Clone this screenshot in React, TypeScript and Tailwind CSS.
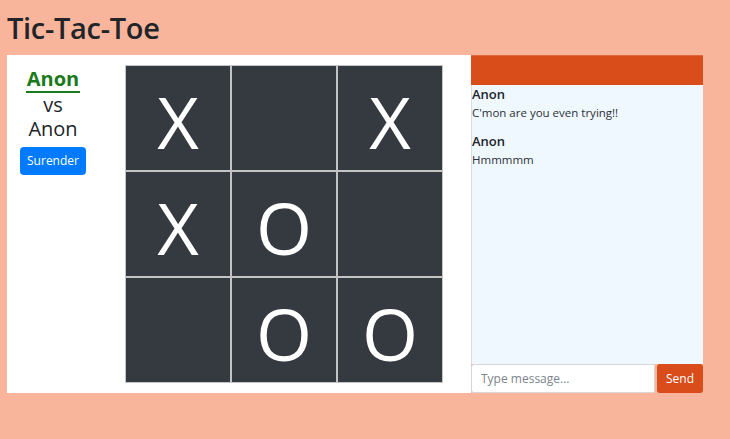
import React from "react";

const board = ["X", "", "X", "X", "O", "", "", "O", "O"];

const messages = [
  { user: "Anon", text: "C'mon are you even trying!!" },
  { user: "Anon", text: "Hmmmmm" },
];

export default function App() {
  return (
    <div
      className="h-[439px] w-full bg-[#f9b59b] text-[#212529]"
      style={{ fontFamily: '"Open Sans", "Noto Sans", sans-serif' }}
    >
      <h1 className="px-[7px] pt-[5px] text-[29px] font-semibold leading-[46px] tracking-[-0.3px]">
        Tic-Tac-Toe
      </h1>
      <div className="ml-[7px] mt-[4px] flex h-[338px] w-[696px]">
        {/* game panel */}
        <div className="flex w-[464px] bg-white">
          <div className="flex w-[92px] flex-col items-center pt-[13px] text-[20px] leading-[24px]">
            <span className="border-b-2 border-[#1b7a1b] px-[1px] pb-[1px] font-bold leading-[22px] text-[#1b7a1b]">
              Anon
            </span>
            <span className="leading-[23px]">vs</span>
            <span className="leading-[25px]">Anon</span>
            <button className="mt-[6px] h-[28px] rounded-[4px] bg-[#007bff] px-[7px] text-[12px] leading-[28px] text-white">
              Surender
            </button>
          </div>
          <div className="ml-[26px] mt-[10px] grid h-[318px] w-[318px] grid-cols-3 self-start">
            {board.map((v, i) => (
              <div
                key={i}
                className="flex h-[106px] w-[106px] items-center justify-center border border-[#c4c4c4] bg-[#343a40] pt-[5px] text-[72px] font-normal leading-none text-white"
              >
                {v}
              </div>
            ))}
          </div>
        </div>
        {/* chat panel */}
        <div className="flex w-[232px] flex-col">
          <div className="h-[30px] border-t border-[#e06a3c] bg-[#d84d1a]" />
          <div className="flex-1 border-l border-[#dcdcdc] bg-[#f0f8ff]">
            {messages.map((m, i) => (
              <div key={i} className="mb-[11px]">
                <div className="text-[13px] font-semibold leading-[18px]">{m.user}</div>
                <div className="mt-[2px] text-[11.5px] leading-[16px] text-[#2b3136]">{m.text}</div>
              </div>
            ))}
          </div>
          <div className="flex h-[29px]">
            <input
              className="h-[29px] w-[184px] rounded-l-[3px] border border-[#d8d8d8] bg-white px-[9px] text-[12px] outline-none placeholder:text-[#7d858c]"
              placeholder="Type message..."
            />
            <button className="ml-[2px] h-[29px] flex-1 rounded-[3px] bg-[#d84d1a] text-[12px] text-white">
              Send
            </button>
          </div>
        </div>
      </div>
    </div>
  );
}
